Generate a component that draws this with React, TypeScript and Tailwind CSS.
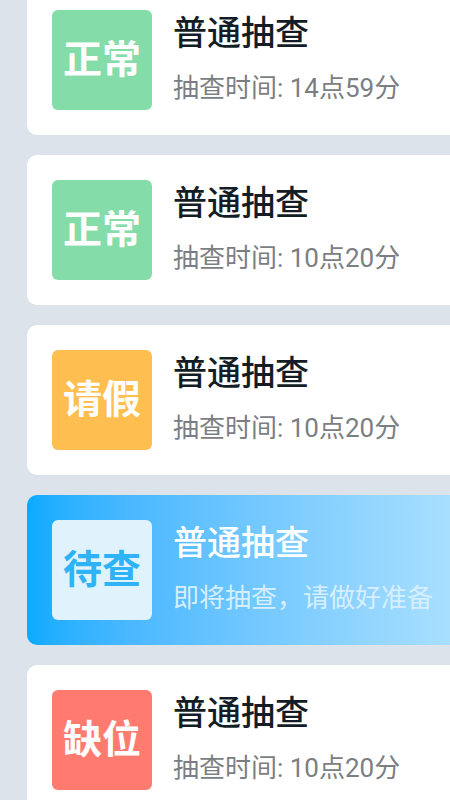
import React from 'react'

type Item = {
    status: string
    badge: string
    sub: string
    active?: boolean
}

const items: Item[] = [
    { status: '正常', badge: 'bg-[#84dca8] text-white', sub: '抽查时间: 14点59分' },
    { status: '正常', badge: 'bg-[#84dca8] text-white', sub: '抽查时间: 10点20分' },
    { status: '请假', badge: 'bg-[#ffbf50] text-white', sub: '抽查时间: 10点20分' },
    { status: '待查', badge: 'bg-[#e0f3fd] text-[#2fb3f7]', sub: '即将抽查，请做好准备', active: true },
    { status: '缺位', badge: 'bg-[#ff7b70] text-white', sub: '抽查时间: 10点20分' },
]

function CheckCard({ item }: { item: Item }) {
    return (
        <div
            className={
                'flex h-[150px] shrink-0 items-start gap-[21px] rounded-l-[10px] p-[25px] ' +
                (item.active ? 'bg-gradient-to-r from-[#06abff] to-[#a8dfff]' : 'bg-white')
            }
        >
            <div
                className={
                    'flex h-[100px] w-[100px] shrink-0 items-center justify-center rounded-[6px] text-[39px] font-bold leading-none ' +
                    item.badge
                }
            >
                {item.status}
            </div>
            <div className="flex flex-col pt-[6px]">
                <span
                    className={
                        'whitespace-nowrap text-[34px] font-medium leading-[34px] ' +
                        (item.active ? 'text-white' : 'text-[#141d26]')
                    }
                >
                    普通抽查
                </span>
                <span
                    className={
                        'mt-[25px] whitespace-nowrap text-[26px] leading-[26px] ' +
                        (item.active ? 'text-[#d6efff]' : 'text-[#7b7e82]')
                    }
                >
                    {item.sub}
                </span>
            </div>
        </div>
    )
}

export default function App() {
    return (
        <div
            className="h-[800px] w-[450px] overflow-hidden bg-[#dce3ea] pl-[27px]"
            style={{ fontFamily: 'Roboto, "Noto Sans CJK SC", sans-serif' }}
        >
            <div className="-mt-[15px] flex flex-col gap-[20px]">
                {items.map((item, i) => (
                    <CheckCard key={i} item={item} />
                ))}
            </div>
        </div>
    )
}
